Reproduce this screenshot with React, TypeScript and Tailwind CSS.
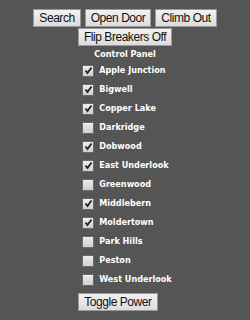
const towns = [
  { name: "Apple Junction", on: true },
  { name: "Bigwell", on: true },
  { name: "Copper Lake", on: true },
  { name: "Darkridge", on: false },
  { name: "Dobwood", on: true },
  { name: "East Underlook", on: true },
  { name: "Greenwood", on: false },
  { name: "Middlebern", on: true },
  { name: "Moldertown", on: true },
  { name: "Park Hills", on: false },
  { name: "Peston", on: false },
  { name: "West Underlook", on: false },
];

function Btn({ label }: { label: string }) {
  return (
    <button className="h-[18px] px-[5px] bg-gradient-to-b from-[#f2f2f2] to-[#dcdcdc] border border-[#9a9a9a] text-[12px] tracking-[-0.45px] leading-none text-[#111] font-['Liberation_Sans',Arial,sans-serif]">
      {label}
    </button>
  );
}

function Box({ on }: { on: boolean }) {
  return (
    <span className="w-[12px] h-[12px] border border-[#6a6a6a] bg-gradient-to-b from-[#eeeeee] to-[#cfcfcf] flex items-center justify-center">
      {on && (
        <svg width="9" height="9" viewBox="0 0 9 9">
          <path d="M1.5 4.5 L3.5 7 L7.5 1.5" stroke="#222" strokeWidth="1.8" fill="none" />
        </svg>
      )}
    </span>
  );
}

export default function App() {
  return (
    <div className="w-[250px] h-[320px] bg-[#555555] pt-[9px] flex flex-col items-center">
      <div className="flex gap-[4px]">
        <Btn label="Search" />
        <Btn label="Open Door" />
        <Btn label="Climb Out" />
      </div>
      <div className="flex mt-[1px]">
        <Btn label="Flip Breakers Off" />
      </div>
      <div className="mt-[2px] text-white text-[9px] font-bold leading-[12px] font-['DejaVu_Sans_Condensed','DejaVu_Sans',sans-serif] [font-stretch:condensed]">
        Control Panel
      </div>
      <div className="mt-[1px] flex flex-col items-start">
        {towns.map((t) => (
          <div key={t.name} className="h-[19px] flex items-center">
            <span className="ml-[4px] mr-[5px]">
              <Box on={t.on} />
            </span>
            <span className="text-white text-[9px] font-bold font-['DejaVu_Sans_Condensed','DejaVu_Sans',sans-serif] [font-stretch:condensed]">
              {t.name}
            </span>
          </div>
        ))}
        <div className="mt-[4px] flex">
          <Btn label="Toggle Power" />
        </div>
      </div>
    </div>
  );
}
